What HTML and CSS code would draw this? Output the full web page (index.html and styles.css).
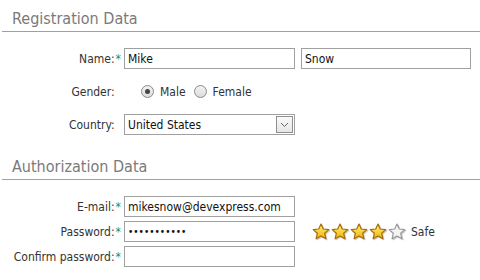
FILE: index.html
```html
<!DOCTYPE html>
<html lang="en">
<head>
  <meta charset="UTF-8">
  <title>Registration</title>
  <link rel="stylesheet" href="styles.css">
</head>
<body>

  <div class="caption">Registration Data</div>
  <div class="form reg">
    <label class="label">Name:<span class="req">*</span></label>
    <input class="edit" type="text" value="Mike">
    <input class="edit" type="text" value="Snow">

    <label class="label">Gender:<span class="req blank">*</span></label>
    <div class="radios">
      <span class="radio checked"></span><span class="rtext">Male</span>
      <span class="radio"></span><span class="rtext">Female</span>
    </div>
    <div></div>

    <label class="label">Country:<span class="req blank">*</span></label>
    <div class="combo">
      <input class="combo-text" type="text" value="United States">
      <span class="combo-btn">
        <svg width="9" height="6" viewBox="0 0 9 6"><path d="M1 1 L4.5 4.5 L8 1" fill="none" stroke="#666" stroke-width="1"/></svg>
      </span>
    </div>
    <div></div>
  </div>

  <div class="caption second">Authorization Data</div>
  <div class="form auth">
    <label class="label">E-mail:<span class="req">*</span></label>
    <input class="edit" type="text" value="mikesnow@devexpress.com">
    <div></div>

    <label class="label">Password:<span class="req">*</span></label>
    <input class="edit pass" type="text" value="&#8226;&#8226;&#8226;&#8226;&#8226;&#8226;&#8226;&#8226;&#8226;&#8226;&#8226;">
    <div class="rating">
      <svg class="star" width="18" height="18" viewBox="0 0 18 18"><defs><linearGradient id="g" x1="0" y1="0" x2="0" y2="1"><stop offset="0" stop-color="#fff27a"/><stop offset="1" stop-color="#f0b400"/></linearGradient></defs><path d="M9 1 L11.3 6 L16.8 6.6 L12.7 10.3 L13.9 15.8 L9 13 L4.1 15.8 L5.3 10.3 L1.2 6.6 L6.7 6 Z" fill="url(#g)" stroke="#a66a12" stroke-width="1.2" stroke-linejoin="round"/></svg>
      <svg class="star" width="18" height="18" viewBox="0 0 18 18"><path d="M9 1 L11.3 6 L16.8 6.6 L12.7 10.3 L13.9 15.8 L9 13 L4.1 15.8 L5.3 10.3 L1.2 6.6 L6.7 6 Z" fill="url(#g)" stroke="#a66a12" stroke-width="1.2" stroke-linejoin="round"/></svg>
      <svg class="star" width="18" height="18" viewBox="0 0 18 18"><path d="M9 1 L11.3 6 L16.8 6.6 L12.7 10.3 L13.9 15.8 L9 13 L4.1 15.8 L5.3 10.3 L1.2 6.6 L6.7 6 Z" fill="url(#g)" stroke="#a66a12" stroke-width="1.2" stroke-linejoin="round"/></svg>
      <svg class="star" width="18" height="18" viewBox="0 0 18 18"><path d="M9 1 L11.3 6 L16.8 6.6 L12.7 10.3 L13.9 15.8 L9 13 L4.1 15.8 L5.3 10.3 L1.2 6.6 L6.7 6 Z" fill="url(#g)" stroke="#a66a12" stroke-width="1.2" stroke-linejoin="round"/></svg>
      <svg class="star" width="18" height="18" viewBox="0 0 18 18"><path d="M9 1 L11.3 6 L16.8 6.6 L12.7 10.3 L13.9 15.8 L9 13 L4.1 15.8 L5.3 10.3 L1.2 6.6 L6.7 6 Z" fill="#f4f4f4" stroke="#9a9a9a" stroke-width="1.2" stroke-linejoin="round"/></svg>
      <span class="safe">Safe</span>
    </div>

    <label class="label">Confirm password:<span class="req">*</span></label>
    <input class="edit" type="text" value="">
    <div></div>
  </div>

</body>
</html>
```

FILE: styles.css
```css
body {
  margin: 0;
  padding: 0 0 0 2px;
  font-family: Tahoma, "DejaVu Sans Condensed", "Liberation Sans", sans-serif;
  font-size: 12px;
  color: #333;
  background: #fff;
}

.caption {
  font-size: 16px;
  color: #7a7a7a;
  padding: 9px 0 3px 10px;
  border-bottom: 1px solid #a0a0a0;
  line-height: 19px;
}

.caption.second {
  margin-top: 13px;
}

.form {
  display: grid;
  grid-template-columns: 119px 171px 175px;
  column-gap: 3px;
  align-items: center;
}

.reg {
  padding-top: 16px;
  row-gap: 12px;
  grid-template-rows: 21px 21px 21px;
}

.reg .edit:nth-of-type(2) {
  margin-left: 3px;
  width: 170px;
}

.auth {
  padding-top: 16px;
  row-gap: 4px;
  grid-template-rows: 21px 21px 21px;
}

.label {
  text-align: right;
  white-space: nowrap;
}

.req {
  color: #2e8b57;
  margin-left: 1px;
}

.req.blank {
  visibility: hidden;
}

.edit {
  box-sizing: border-box;
  width: 171px;
  height: 21px;
  border: 1px solid #a0a0a0;
  padding: 0 3px;
  margin: 0;
  font: inherit;
  color: #111;
  outline: none;
}

.pass {
  font-size: 10px;
  letter-spacing: 0;
}

.radios {
  display: flex;
  align-items: center;
  padding-left: 17px;
}

.radio {
  box-sizing: border-box;
  width: 13px;
  height: 13px;
  border: 1px solid #8a8a8a;
  border-radius: 50%;
  background: linear-gradient(#f2f2f2, #dcdcdc);
  display: flex;
  align-items: center;
  justify-content: center;
}

.radio.checked::after {
  content: "";
  width: 5px;
  height: 5px;
  border-radius: 50%;
  background: #444;
}

.rtext {
  margin: 0 8px 0 6px;
}

.combo {
  box-sizing: border-box;
  width: 171px;
  height: 21px;
  border: 1px solid #a0a0a0;
  display: flex;
  align-items: center;
}

.combo-text {
  flex: 1;
  min-width: 0;
  border: none;
  padding: 0 3px;
  font: inherit;
  color: #111;
  outline: none;
  height: 19px;
}

.combo-btn {
  box-sizing: border-box;
  width: 17px;
  height: 17px;
  margin-right: 1px;
  border: 1px solid #8f8f8f;
  background: linear-gradient(#fafafa, #e6e6e6);
  display: flex;
  align-items: center;
  justify-content: center;
}

.rating {
  display: flex;
  align-items: center;
  padding-left: 14px;
  gap: 1px;
}

.star {
  filter: drop-shadow(1px 1px 0.5px rgba(0, 0, 0, 0.2));
}

.safe {
  margin-left: 4px;
}
```
